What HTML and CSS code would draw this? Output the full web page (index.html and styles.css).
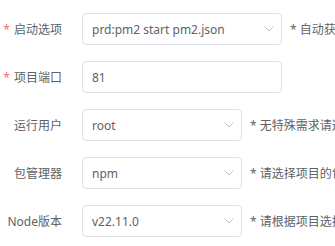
FILE: index.html
```html
<!DOCTYPE html>
<html lang="zh-CN">
<head>
<meta charset="utf-8">
<title>项目设置</title>
<link rel="stylesheet" href="styles.css">
</head>
<body>
<form class="form">
  <div class="row">
    <label class="label required">启动选项</label>
    <div class="select wide">
      <span class="value">prd:pm2 start pm2.json</span>
      <svg class="arrow" viewBox="0 0 10 6" width="10" height="6"><path d="M0.5 0.5 L5 5 L9.5 0.5" fill="none" stroke="#c0c4cc" stroke-width="1"/></svg>
    </div>
    <span class="hint">* 自动获取package.json文件中的启动模式</span>
  </div>
  <div class="row">
    <label class="label required">项目端口</label>
    <div class="input wide"><span class="value">81</span></div>
  </div>
  <div class="row">
    <label class="label">运行用户</label>
    <div class="select">
      <span class="value">root</span>
      <svg class="arrow" viewBox="0 0 10 6" width="10" height="6"><path d="M0.5 0.5 L5 5 L9.5 0.5" fill="none" stroke="#c0c4cc" stroke-width="1"/></svg>
    </div>
    <span class="hint">* 无特殊需求请选择www用户</span>
  </div>
  <div class="row">
    <label class="label">包管理器</label>
    <div class="select">
      <span class="value">npm</span>
      <svg class="arrow" viewBox="0 0 10 6" width="10" height="6"><path d="M0.5 0.5 L5 5 L9.5 0.5" fill="none" stroke="#c0c4cc" stroke-width="1"/></svg>
    </div>
    <span class="hint">* 请选择项目的包管理器</span>
  </div>
  <div class="row">
    <label class="label">Node版本</label>
    <div class="select">
      <span class="value">v22.11.0</span>
      <svg class="arrow" viewBox="0 0 10 6" width="10" height="6"><path d="M0.5 0.5 L5 5 L9.5 0.5" fill="none" stroke="#c0c4cc" stroke-width="1"/></svg>
    </div>
    <span class="hint">* 请根据项目选择合适的Node版本</span>
  </div>
</form>
</body>
</html>
```
FILE: styles.css
```css
html, body {
  margin: 0;
  padding: 0;
  background: #ffffff;
  overflow: hidden;
}
body {
  font-family: "Noto Sans", "Noto Sans CJK SC", sans-serif;
  color: #606266;
}
.form {
  padding-top: 13px;
  display: flex;
  flex-direction: column;
  gap: 16px;
}
.row {
  display: flex;
  align-items: center;
  height: 32px;
  white-space: nowrap;
}
.label {
  width: 62px;
  flex: none;
  text-align: right;
  font-size: 12px;
  color: #606266;
  margin-right: 20px;
}
.required::before {
  content: "*";
  color: #f56c6c;
  margin-right: 4px;
}
.select, .input {
  flex: none;
  box-sizing: border-box;
  width: 160px;
  height: 32px;
  border: 1px solid #dcdfe6;
  border-radius: 4px;
  display: flex;
  align-items: center;
  padding: 0 6px 0 9px;
  font-size: 12px;
  color: #606266;
}
.wide {
  width: 200px;
}
.value {
  flex: 1;
}
.arrow {
  flex: none;
  margin-right: 1px;
}
.hint {
  margin-left: 8px;
  font-size: 12px;
  color: #606266;
}
```
